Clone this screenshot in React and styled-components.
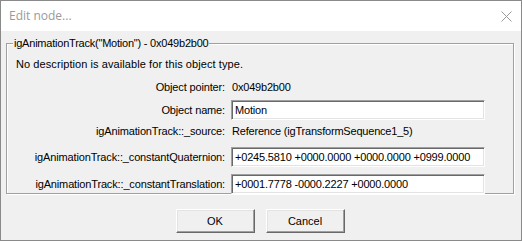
import React from "react";
import styled, { createGlobalStyle } from "styled-components";

const Global = createGlobalStyle`
  html, body { margin: 0; padding: 0; background: #f0f0f0; }
  body { font-family: "Liberation Sans", Arial, sans-serif; font-size: 11px; color: #000; }
`;

const Window = styled.div`
  width: 522px;
  height: 241px;
  box-sizing: border-box;
  border: 1px solid #8a8a8a;
  background: #f0f0f0;
  display: flex;
  flex-direction: column;
`;

const TitleBar = styled.div`
  height: 30px;
  background: #fff;
  display: flex;
  align-items: center;
  justify-content: space-between;
  padding: 0 9px 0 8px;
  flex: none;
`;

const Title = styled.span`
  font-family: "Open Sans", "Noto Sans", sans-serif;
  font-size: 12px;
  color: #9a9a9a;
  margin-top: -1px;
`;

const CloseIcon = () => (
  <svg width="11" height="11" viewBox="0 0 11 11">
    <path d="M0.5 0.5 L10.5 10.5 M10.5 0.5 L0.5 10.5" stroke="#9a9a9a" strokeWidth="1" fill="none" />
  </svg>
);

const Body = styled.div`
  flex: 1;
  display: flex;
  flex-direction: column;
  padding: 6px 7px 0 5px;
`;

const Group = styled.fieldset`
  margin: 0;
  padding: 0 0 4px 0;
  border: 1px solid #a0a0a0;
  box-shadow: inset 1px 1px 0 #fff, 1px 1px 0 #fff;
  height: 157px;
  box-sizing: border-box;
  display: flex;
  flex-direction: column;
`;

const Legend = styled.legend`
  margin-left: 6px;
  padding: 0 1px;
  background: #f0f0f0;
  line-height: 13px;
  letter-spacing: -0.22px;
`;

const Desc = styled.div`
  padding-left: 9px;
  margin-top: 6px;
  height: 16px;
  line-height: 16px;
  letter-spacing: 0.08px;
`;

const Row = styled.div`
  display: grid;
  grid-template-columns: 218px 254px;
  column-gap: 6px;
  align-items: center;
  height: ${(p) => p.h}px;
  margin-top: ${(p) => p.mt}px;
`;

const Label = styled.span`
  text-align: right;
  white-space: nowrap;
  letter-spacing: -0.15px;
`;

const Value = styled.span`
  padding-left: 1px;
  white-space: nowrap;
  letter-spacing: -0.2px;
`;

const TextBox = styled.div`
  height: 20px;
  box-sizing: border-box;
  border: 1px solid;
  border-color: #a0a0a0 #fff #fff #a0a0a0;
  box-shadow: inset 1px 1px 0 #696969, inset -1px -1px 0 #e3e3e3;
  background: #fff;
  padding: 0 3px;
  display: flex;
  align-items: center;
  white-space: nowrap;
  overflow: hidden;
  letter-spacing: -0.18px;
`;

const Buttons = styled.div`
  display: flex;
  justify-content: center;
  gap: 11px;
  margin-top: 15px;
`;

const Button = styled.div`
  width: 79px;
  height: 24px;
  box-sizing: border-box;
  border: 1px solid;
  border-color: #fff #696969 #696969 #fff;
  box-shadow: inset -1px -1px 0 #a0a0a0, inset 1px 1px 0 #e3e3e3;
  background: #f0f0f0;
  display: flex;
  align-items: center;
  justify-content: center;
`;

const rows = [
  { label: "Object pointer:", value: "0x049b2b00", mt: 5, h: 20 },
  { label: "Object name:", box: "Motion", mt: 2, h: 22 },
  { label: "igAnimationTrack::_source:", value: "Reference (igTransformSequence1_5)", mt: 0, h: 20 },
  { label: "igAnimationTrack::_constantQuaternion:", box: "+0245.5810 +0000.0000 +0000.0000 +0999.0000", mt: 5, h: 22 },
  { label: "igAnimationTrack::_constantTranslation:", box: "+0001.7778 -0000.2227 +0000.0000", mt: 5, h: 22 },
];

export default function App() {
  return (
    <>
      <Global />
      <Window>
        <TitleBar>
          <Title>Edit node...</Title>
          <CloseIcon />
        </TitleBar>
        <Body>
          <Group>
            <Legend>igAnimationTrack("Motion") - 0x049b2b00</Legend>
            <Desc>No description is available for this object type.</Desc>
            {rows.map((r) => (
              <Row key={r.label} mt={r.mt} h={r.h}>
                <Label>{r.label}</Label>
                {r.box !== undefined ? <TextBox>{r.box}</TextBox> : <Value>{r.value}</Value>}
              </Row>
            ))}
          </Group>
          <Buttons>
            <Button>OK</Button>
            <Button>Cancel</Button>
          </Buttons>
        </Body>
      </Window>
    </>
  );
}
